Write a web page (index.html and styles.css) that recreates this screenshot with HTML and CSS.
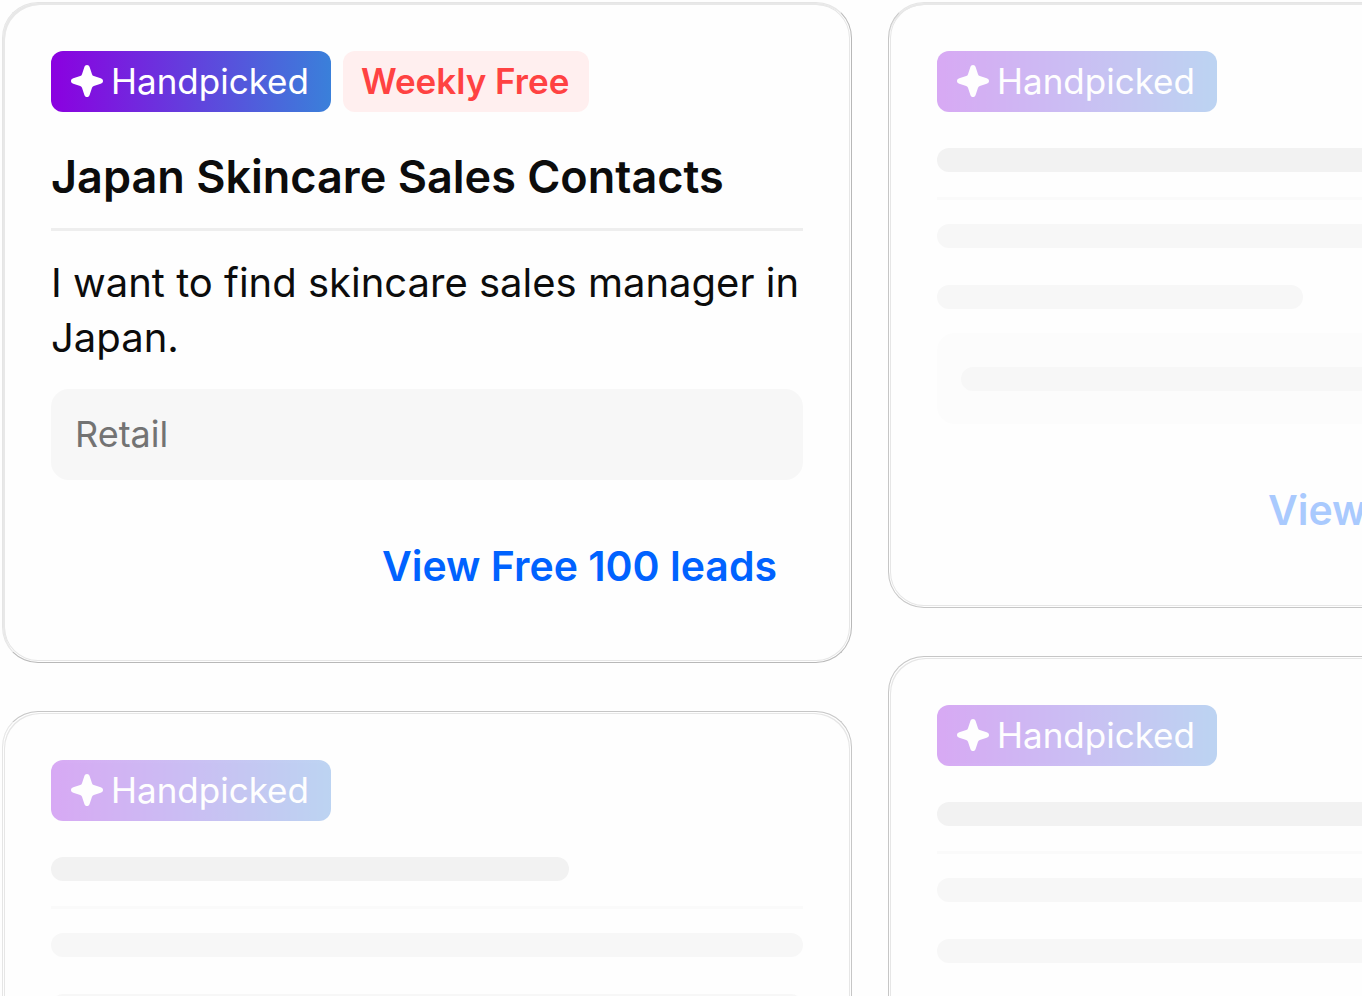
FILE: index.html
```html
<!DOCTYPE html>
<html lang="en">
<head>
<meta charset="utf-8">
<title>Handpicked leads</title>
<link rel="stylesheet" href="styles.css">
</head>
<body>
<svg class="sprite" aria-hidden="true">
  <symbol id="spark" viewBox="0 0 32 32">
    <path d="M16 0C17.300 0 18.200 .900 18.700 2.300L21 9.200Q21.400 10.600 22.800 11L29.700 13.300C31.100 13.800 32 14.700 32 16S31.100 18.200 29.700 18.700L22.800 21Q21.400 21.400 21 22.800L18.700 29.700C18.200 31.100 17.300 32 16 32S13.800 31.100 13.300 29.700L11 22.800Q10.600 21.400 9.200 21L2.300 18.700C.900 18.200 0 17.300 0 16S.900 13.800 2.300 13.300L9.200 11Q10.600 10.600 11 9.200L13.300 2.300C13.800 .900 14.700 0 16 0Z" fill="currentColor"/>
  </symbol>
</svg>
<main class="board">
  <div class="column">
    <article class="card card-first">
      <div class="badges">
        <span class="badge badge-picked"><svg class="spark"><use href="#spark"/></svg>Handpicked</span>
        <span class="badge badge-free">Weekly Free</span>
      </div>
      <h2 class="title">Japan Skincare Sales Contacts</h2>
      <hr class="rule">
      <p class="text">I want to find skincare sales manager in Japan.</p>
      <div class="tag">Retail</div>
      <button class="view" type="button">View Free 100 leads</button>
    </article>
    <article class="card placeholder">
      <div class="badges">
        <span class="badge badge-picked"><svg class="spark"><use href="#spark"/></svg>Handpicked</span>
      </div>
      <div class="bar bar-title bar-medium"></div>
      <hr class="rule">
      <div class="bars"><div class="bar"></div><div class="bar"></div></div>
    </article>
  </div>
  <div class="column">
    <article class="card card-top placeholder">
      <div class="badges">
        <span class="badge badge-picked"><svg class="spark"><use href="#spark"/></svg>Handpicked</span>
      </div>
      <div class="bar bar-title"></div>
      <hr class="rule">
      <div class="bars"><div class="bar"></div><div class="bar bar-short"></div></div>
      <div class="tag"><div class="bar"></div></div>
      <button class="view" type="button">View Free 100 leads</button>
    </article>
    <article class="card placeholder">
      <div class="badges">
        <span class="badge badge-picked"><svg class="spark"><use href="#spark"/></svg>Handpicked</span>
      </div>
      <div class="bar bar-title"></div>
      <hr class="rule">
      <div class="bars"><div class="bar"></div><div class="bar"></div></div>
    </article>
  </div>
</main>
</body>
</html>
```

FILE: styles.css
```css
* {
  box-sizing: border-box;
}

body {
  margin: 0;
  height: 100vh;
  overflow: hidden;
  background: #fefefe;
  color: #0c0c0c;
  font-family: Inter, "Liberation Sans", sans-serif;
}

.sprite {
  position: absolute;
  width: 0;
  height: 0;
}

.board {
  display: grid;
  grid-template-columns: repeat(2, minmax(850px, 1fr));
  gap: 36px;
  height: 100%;
  padding: 2px 2px 0;
}

.column {
  display: flex;
  flex-direction: column;
  gap: 48px;
}

.card {
  display: flex;
  flex-direction: column;
  flex-shrink: 0;
  padding: 48px;
  border: 1px solid #c6c6c6;
  border-radius: 36px;
  background: #fefefe;
  box-shadow: inset 0 0 0 1px #fefefe, inset 0 0 0 2px #e6e6e6;
}

.card:last-child {
  flex: 1 0 auto;
  padding-bottom: 0;
  border-bottom: 0;
  border-radius: 36px 36px 0 0;
  box-shadow: inset 1px 1px 0 #fefefe, inset -1px 1px 0 #fefefe,
    inset 2px 2px 0 #e6e6e6, inset -2px 2px 0 #e6e6e6;
}

.card-first {
  padding-bottom: 47px;
  border-color: #e5e5e5 #b8b8b8 #b8b8b8 #e5e5e5;
  box-shadow: inset 2px 2px 0 #e8e8e8, inset 0 0 0 1px #fefefe, inset 0 0 0 2px #e6e6e6;
}

.card-top {
  border-top-color: #e5e5e5;
  box-shadow: inset 0 2px 0 #e8e8e8, inset 0 0 0 1px #fefefe, inset 0 0 0 2px #e6e6e6;
}

.column:first-child .card {
  border-left-color: #e5e5e5;
}

.badges {
  display: flex;
  gap: 12px;
  margin-bottom: 36px;
}

.badge {
  display: flex;
  align-items: center;
  gap: 8px;
  height: 61px;
  padding: 0 20px 1px;
  border-radius: 12px;
  font-size: 35px;
  line-height: 44px;
}

.badge-picked {
  padding-right: 22px;
  background: linear-gradient(90deg, #8b00e0, #3a80da);
  color: #fff;
}

.badge-free {
  padding: 0 20px 1px 18px;
  background: #ffefef;
  color: #ff4242;
  font-weight: 600;
}

.spark {
  width: 32px;
  height: 32px;
}

.title {
  margin: 0 0 22px;
  font-size: 45px;
  line-height: 58px;
  font-weight: 600;
}

.rule {
  width: 100%;
  height: 3px;
  margin: 0 0 24px;
  border: 0;
  background: #eee;
}

.text {
  margin: 0 0 24px;
  font-size: 40px;
  line-height: 55px;
}

.tag {
  display: flex;
  align-items: center;
  height: 91px;
  margin-bottom: 33px;
  padding: 0 24px 1px;
  border-radius: 18px;
  background: #f7f7f7;
  color: #737373;
  font-size: 36px;
}

.view {
  align-self: flex-end;
  padding: 26px 26px 22px;
  border: 0;
  background: none;
  color: #0062ff;
  font: inherit;
  font-size: 41px;
  line-height: 54px;
  font-weight: 600;
}

.bars {
  display: flex;
  flex-direction: column;
  gap: 37px;
}

.bars + .tag {
  margin-top: 24px;
}

.bar {
  width: 100%;
  height: 24px;
  border-radius: 12px;
  background: #f7f7f7;
}

.bar-title {
  margin-bottom: 25px;
  background: #f2f2f2;
}

.bar-medium {
  width: 518px;
}

.bar-short {
  width: 366px;
}

.placeholder .badge,
.placeholder .view {
  opacity: 0.33;
}

.placeholder .rule {
  background: #fafafa;
}

.placeholder .tag {
  padding-bottom: 0;
  background: #fcfcfc;
}
```
